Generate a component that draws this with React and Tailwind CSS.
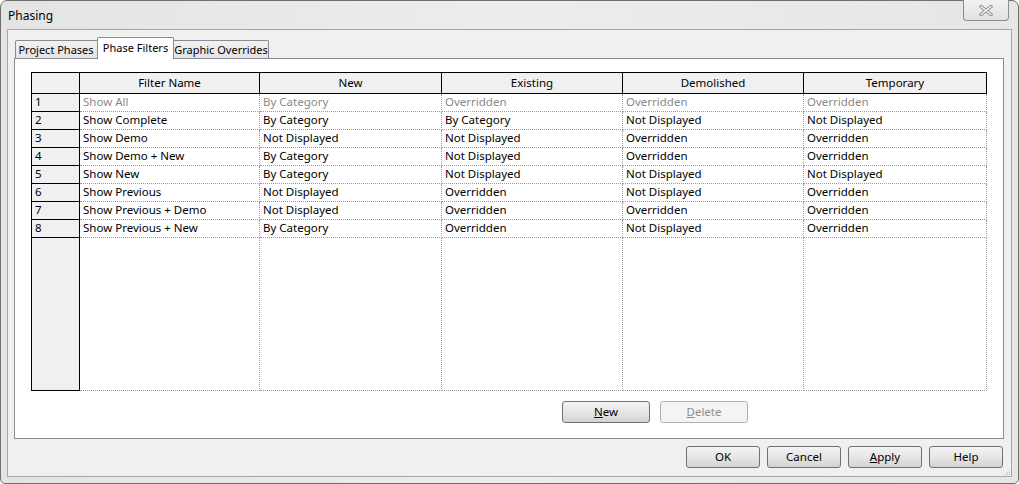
import React from 'react'

const font = { fontFamily: '"Noto Sans", "Open Sans", Arial, sans-serif' }

const rows = [
  ['Show All', 'By Category', 'Overridden', 'Overridden', 'Overridden'],
  ['Show Complete', 'By Category', 'By Category', 'Not Displayed', 'Not Displayed'],
  ['Show Demo', 'Not Displayed', 'Not Displayed', 'Overridden', 'Overridden'],
  ['Show Demo + New', 'By Category', 'Not Displayed', 'Overridden', 'Overridden'],
  ['Show New', 'By Category', 'Not Displayed', 'Not Displayed', 'Not Displayed'],
  ['Show Previous', 'Not Displayed', 'Overridden', 'Not Displayed', 'Overridden'],
  ['Show Previous + Demo', 'Not Displayed', 'Overridden', 'Overridden', 'Overridden'],
  ['Show Previous + New', 'By Category', 'Overridden', 'Not Displayed', 'Overridden'],
]

const headers = ['Filter Name', 'New', 'Existing', 'Demolished', 'Temporary']
const widths = ['w-[180px]', 'w-[182px]', 'w-[181px]', 'w-[181px]', 'w-[183px]']

function Button({ children, disabled, className = '' }) {
  return (
    <button
      type="button"
      className={
        'h-[22px] rounded-[3px] border text-[11.5px] leading-none flex items-center justify-center ' +
        (disabled
          ? 'border-[#adb2b5] bg-[#f4f4f4] text-[#8d8d8d] '
          : 'border-[#707070] bg-gradient-to-b from-[#f3f3f3] via-[#e6e6e6] to-[#d3d3d3] text-black ') +
        className
      }
    >
      {children}
    </button>
  )
}

function CloseIcon() {
  return (
    <svg width="14" height="11" viewBox="0 0 14 11">
      <path d="M2 1.5 L12 9.5 M12 1.5 L2 9.5" stroke="#8a8a8a" strokeWidth="3.4" strokeLinecap="round" fill="none" />
      <path d="M2 1.5 L12 9.5 M12 1.5 L2 9.5" stroke="#ffffff" strokeWidth="1.4" strokeLinecap="round" fill="none" />
    </svg>
  )
}

export default function App() {
  return (
    <div style={font} className="w-[1019px] h-[484px] bg-white text-black">
      <div className="w-[1019px] h-[484px] border border-[#6f6f6f] rounded-t-[7px] rounded-b-[5px] bg-gradient-to-r from-[#e4e4e4] via-[#ededed] to-[#e6e6e6] px-[6px] pb-[6px] flex flex-col">
        {/* title bar */}
        <div className="h-[28px] flex justify-between shrink-0">
          <div className="pl-[1px] pt-[9px] text-[12px] leading-none">Phasing</div>
          <div className="mr-[3px] -mt-px w-[46px] h-[21px] border border-[#8c8c8c] border-t-0 rounded-b-[4px] bg-gradient-to-b from-[#f2f2f2] to-[#e2e2e2] flex items-center justify-center">
            <CloseIcon />
          </div>
        </div>

        {/* client area */}
        <div className="flex-1 border border-[#a6a6a6] bg-[#f0f0f0] pl-[6px] pr-[7px] pt-[7px] relative">
          {/* tabs */}
          <div className="h-[21px] flex items-end pl-[1px] text-[11px] leading-none whitespace-nowrap">
            <div className="h-[18px] w-[84px] border border-b-0 border-[#898c95] rounded-t-[2px] bg-gradient-to-b from-[#f2f2f2] to-[#e3e3e3] flex items-center justify-center pr-[2px]">
              Project Phases
            </div>
            <div className="relative z-10 -ml-[2px] -mb-px h-[22px] w-[77px] border border-b-0 border-[#898c95] rounded-t-[2px] bg-white flex items-start pt-[4px] justify-center">
              Phase Filters
            </div>
            <div className="-ml-px h-[18px] w-[96px] border border-b-0 border-[#898c95] rounded-t-[2px] bg-gradient-to-b from-[#f2f2f2] to-[#e3e3e3] flex items-center justify-center">
              Graphic Overrides
            </div>
          </div>

          {/* tab panel */}
          <div className="h-[381px] border border-[#898c95] bg-white pt-[13px] pl-[16px]">
            <div className="h-[319px] w-[956px] flex flex-col text-[11.5px] leading-none">
              {/* header */}
              <div className="flex h-[22px] shrink-0">
                <div className="w-[49px] border border-black bg-[#f0f0f0]" />
                {headers.map((h, i) => (
                  <div
                    key={h}
                    className={widths[i] + ' border-y border-r border-black bg-[#f0f0f0] flex items-center justify-center'}
                  >
                    {h}
                  </div>
                ))}
              </div>
              {/* rows */}
              {rows.map((r, ri) => (
                <div key={ri} className="flex h-[18px] shrink-0">
                  <div className="w-[49px] border-x border-b border-black bg-[#f0f0f0] pl-[3px] pb-[1px] flex items-center text-black">
                    {ri + 1}
                  </div>
                  {r.map((c, ci) => (
                    <div
                      key={ci}
                      className={
                        widths[ci] +
                        ' border-r border-b border-dotted border-[#9a9a9a] pl-[3px] pb-[1px] flex items-center whitespace-nowrap ' +
                        (ri === 0 ? 'text-[#8a8a8a]' : 'text-black')
                      }
                    >
                      {c}
                    </div>
                  ))}
                </div>
              ))}
              {/* filler */}
              <div className="flex flex-1">
                <div className="w-[49px] border-x border-b border-black bg-[#f0f0f0]" />
                {widths.map((w, i) => (
                  <div key={i} className={w + ' border-r border-b border-dotted border-[#9a9a9a]'} />
                ))}
              </div>
            </div>

            <div className="mt-[10px] flex gap-[10px] pl-[531px]">
              <Button className="w-[88px]">
                <span><span className="underline">N</span>ew</span>
              </Button>
              <Button disabled className="w-[88px]">
                <span><span className="underline">D</span>elete</span>
              </Button>
            </div>
          </div>

          {/* bottom buttons */}
          <div className="mt-[7px] flex justify-end gap-[7px] pr-[1px]">
            <Button className="w-[74px]">OK</Button>
            <Button className="w-[74px]">Cancel</Button>
            <Button className="w-[74px]">
              <span><span className="underline">A</span>pply</span>
            </Button>
            <Button className="w-[74px]">Help</Button>
          </div>

          {/* resize grip */}
          <div className="absolute right-[1px] bottom-[1px] grid grid-cols-3 gap-[1px]">
            <span className="w-[1px] h-[1px]" />
            <span className="w-[1px] h-[1px]" />
            <span className="w-[1px] h-[1px] bg-[#b5b5b5]" />
            <span className="w-[1px] h-[1px]" />
            <span className="w-[1px] h-[1px] bg-[#b5b5b5]" />
            <span className="w-[1px] h-[1px] bg-[#b5b5b5]" />
            <span className="w-[1px] h-[1px] bg-[#b5b5b5]" />
            <span className="w-[1px] h-[1px] bg-[#b5b5b5]" />
            <span className="w-[1px] h-[1px] bg-[#b5b5b5]" />
          </div>
        </div>
      </div>
    </div>
  )
}
